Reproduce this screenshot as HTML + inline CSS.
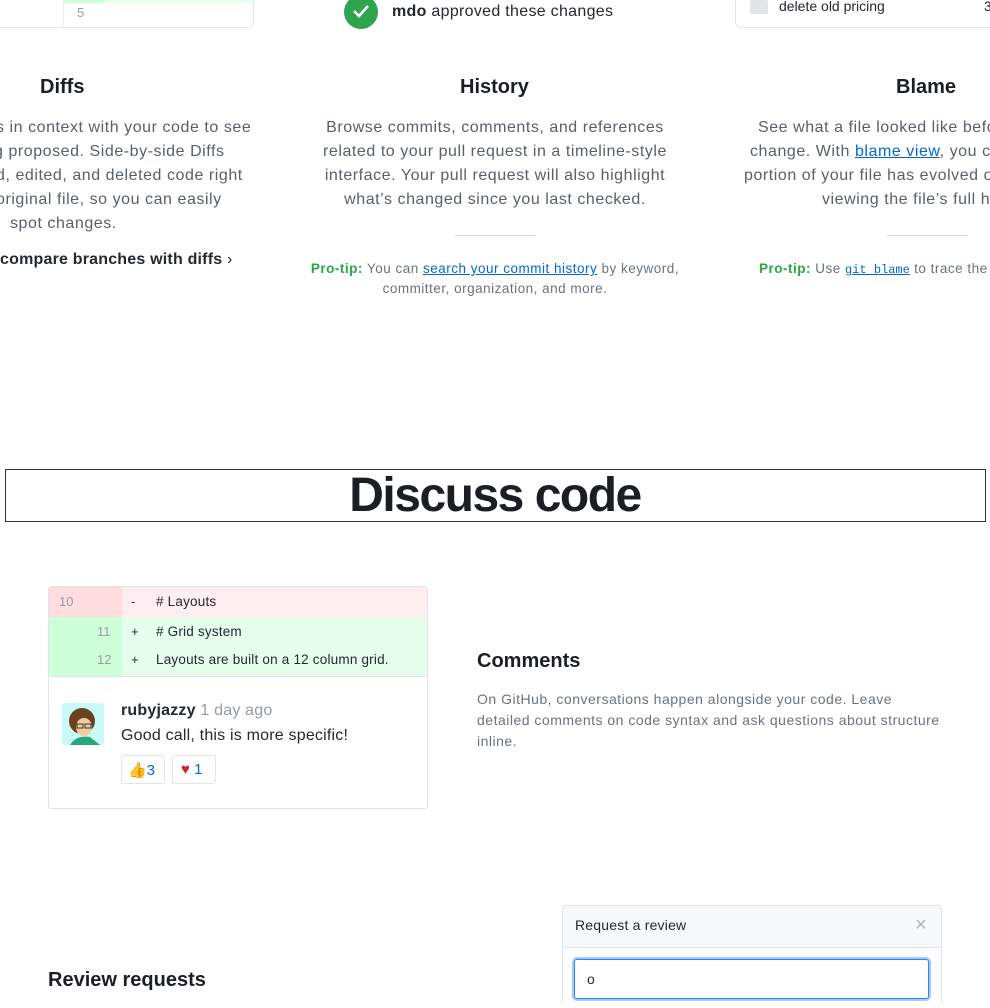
<!DOCTYPE html>
<html><head><meta charset="utf-8"><style>
*{margin:0;padding:0;box-sizing:border-box}
body{width:990px;height:990px;overflow:hidden;background:#fff;font-family:"Liberation Sans",sans-serif;position:relative;color:#24292e}
.a{position:absolute;white-space:nowrap}
h3{position:absolute;font-size:20px;font-weight:bold;color:#1b1f23}
.p{position:absolute;font-size:16px;line-height:24px;color:#586069;text-align:center;white-space:nowrap;letter-spacing:0.55px}
.tip{position:absolute;font-size:13.5px;line-height:20px;color:#6a737d;text-align:center;white-space:nowrap;letter-spacing:0.5px}
.tip b{color:#28a745}
a{color:#0366d6;text-decoration:underline}
.hr{position:absolute;height:1px;background:#d1d5da;width:80px}
</style></head><body>
<div class="a" style="left:-10px;top:-10px;width:264px;height:38px;border:1px solid #e1e4e8;border-radius:6px;"></div>
<div class="a" style="left:63px;top:-10px;width:1px;height:37px;background:#eaecef"></div>
<div class="a" style="left:64px;top:0;width:40px;height:3px;background:#cdffd8"></div>
<div class="a" style="left:104px;top:0;width:150px;height:3px;background:#e6ffed"></div>
<div class="a" style="left:77px;top:5px;font-size:13px;color:#959da5">5</div>
<div class="a" style="left:344px;top:-5px;width:34px;height:34px;border-radius:50%;background:#2ea44f"></div>
<svg class="a" style="left:352px;top:4px" width="18" height="14"><path d="M2 7l5 5 9-10" stroke="#fff" stroke-width="2.5" fill="none"/></svg>
<div class="a" style="left:392px;top:3px;font-size:16px;color:#24292e;letter-spacing:0.3px"><b>mdo</b> approved these changes</div>
<div class="a" style="left:735px;top:-10px;width:270px;height:38px;border:1px solid #e1e4e8;border-radius:6px"></div>
<div class="a" style="left:750px;top:0;width:18px;height:14px;background:#e1e4e8;border-radius:2px"></div>
<div class="a" style="left:779px;top:-2px;font-size:14px;color:#24292e">delete old pricing</div>
<div class="a" style="left:984px;top:-2px;font-size:14px;color:#24292e">3</div>

<h3 style="left:40px;top:76px">Diffs</h3>
<h3 style="left:460px;top:76px">History</h3>
<h3 style="left:896px;top:76px">Blame</h3>

<div class="p" style="left:-4px;top:116px;text-align:left">s in context with your code to see</div>
<div class="p" style="left:-6px;top:140px;text-align:left">g proposed. Side-by-side Diffs</div>
<div class="p" style="left:-4px;top:164px;text-align:left">d, edited, and deleted code right</div>
<div class="p" style="left:-4px;top:188px;text-align:left">original file, so you can easily</div>
<div class="p" style="left:10px;top:212px;text-align:left">spot changes.</div>
<div class="a" style="left:0;top:251px;font-size:16px;font-weight:bold;color:#24292e;letter-spacing:0.2px">compare branches with diffs <span style="font-weight:normal">›</span></div>

<div class="p" style="left:275px;width:440px;top:116px">Browse commits, comments, and references<br>related to your pull request in a timeline-style<br>interface. Your pull request will also highlight<br>what’s changed since you last checked.</div>
<div class="hr" style="left:455px;top:235px"></div>
<div class="tip" style="left:255px;width:480px;top:259px"><b>Pro-tip:</b> You can <a>search your commit history</a> by keyword,<br>committer, organization, and more.</div>

<div class="p" style="left:758px;top:116px;text-align:left">See what a file looked like befo</div>
<div class="p" style="left:750px;top:140px;text-align:left">change. With <a>blame view</a>, you ca</div>
<div class="p" style="left:744px;top:164px;text-align:left">portion of your file has evolved ov</div>
<div class="p" style="left:822px;top:188px;text-align:left">viewing the file’s full hi</div>
<div class="hr" style="left:887px;top:235px"></div>
<div class="tip" style="left:759px;top:259px;text-align:left"><b>Pro-tip:</b> Use <a style="font-family:'Liberation Mono',monospace;font-size:12px;letter-spacing:0">git blame</a> to trace the c</div>

<div class="a" style="left:5px;top:469px;width:981px;height:53px;border:1px solid #333"></div>
<div class="a" style="left:0;width:990px;top:468px;text-align:center;font-size:48px;font-weight:bold;letter-spacing:-1.5px;color:#1b1f23">Discuss code</div>

<div class="a" style="left:48px;top:586px;width:380px;height:223px;border:1px solid #e1e4e8;border-radius:3px;overflow:hidden">
 <div style="height:30px;background:#ffeef0;position:relative"><div style="position:absolute;left:0;top:0;width:73px;height:30px;background:#ffdce0"></div></div>
 <div style="height:59px;background:#e6ffed;position:relative"><div style="position:absolute;left:0;top:0;width:73px;height:59px;background:#cdffd8"></div></div>
 <div style="border-top:1px solid #e1e4e8"></div>
</div>
<div class="a" style="left:59px;top:594px;font-size:13px;color:#959da5">10</div>
<div class="a" style="left:97px;top:624px;font-size:13px;color:#959da5">11</div>
<div class="a" style="left:97px;top:652px;font-size:13px;color:#959da5">12</div>
<div class="a" style="left:131px;top:594px;font-size:13px">-</div>
<div class="a" style="left:131px;top:624px;font-size:13px">+</div>
<div class="a" style="left:131px;top:652px;font-size:13px">+</div>
<div class="a" style="left:156px;top:594px;font-size:13.5px;letter-spacing:0.2px">&#35; Layouts</div>
<div class="a" style="left:156px;top:624px;font-size:13.5px;letter-spacing:0.2px">&#35; Grid system</div>
<div class="a" style="left:156px;top:652px;font-size:13.5px;letter-spacing:0.2px">Layouts are built on a 12 column grid.</div>
<svg class="a" style="left:62px;top:703px" width="42" height="42"><rect width="42" height="42" rx="3" fill="#c8fbf8"/><circle cx="20" cy="18" r="13" fill="#6b4220"/><ellipse cx="22" cy="24" rx="8" ry="9" fill="#f3c9a0"/><rect x="15" y="21" width="6" height="4" fill="none" stroke="#333"/><rect x="23" y="21" width="6" height="4" fill="none" stroke="#333"/><path d="M8 42q6-10 20-8l10 8z" fill="#2aa57a"/></svg>
<div class="a" style="left:121px;top:702px;font-size:16px;letter-spacing:0.2px"><b>rubyjazzy</b> <span style="color:#959da5">1 day ago</span></div>
<div class="a" style="left:121px;top:727px;font-size:16px;letter-spacing:0.2px">Good call, this is more specific!</div>
<div class="a" style="left:121px;top:755px;width:44px;height:29px;border:1px solid #e1e4e8;border-radius:3px;font-size:15px;padding:5px 0 0 6px;color:#0366d6">👍3</div>
<div class="a" style="left:172px;top:755px;width:44px;height:29px;border:1px solid #e1e4e8;border-radius:3px;font-size:15px;padding:5px 0 0 8px;color:#0366d6"><span style="color:#cb2431">♥</span> 1</div>

<h3 style="left:477px;top:650px">Comments</h3>
<div class="a" style="left:477px;top:689px;font-size:14px;line-height:21px;color:#6a737d;letter-spacing:0.5px">On GitHub, conversations happen alongside your code. Leave<br>detailed comments on code syntax and ask questions about structure<br>inline.</div>

<h3 style="left:48px;top:969px">Review requests</h3>
<div class="a" style="left:562px;top:905px;width:380px;height:100px;border:1px solid #e1e4e8;border-radius:4px;background:#f6f8fa"></div>
<div class="a" style="left:563px;top:947px;width:378px;height:1px;background:#e1e4e8"></div>
<div class="a" style="left:563px;top:948px;width:378px;height:60px;background:#fff"></div>
<div class="a" style="left:575px;top:917px;font-size:14px;letter-spacing:0.2px">Request a review</div>
<div class="a" style="left:915px;top:914px;font-size:20px;color:#b0b5bb">×</div>
<div class="a" style="left:574px;top:959px;width:355px;height:40px;border:1px solid #2188ff;border-radius:3px;box-shadow:0 0 0 2px #a6ccf5"></div>
<div class="a" style="left:587px;top:971px;font-size:14px">o</div>
</body></html>
